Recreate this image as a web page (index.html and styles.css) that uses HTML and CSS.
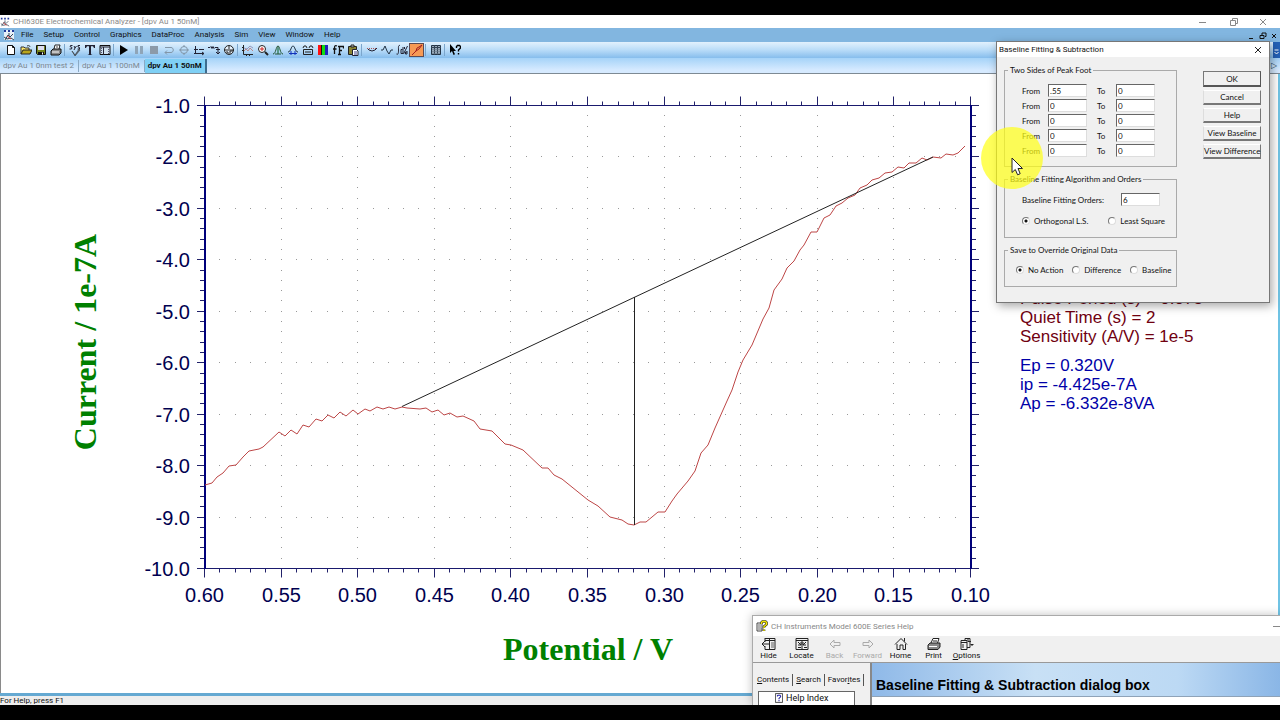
FILE: index.html
```html
<!DOCTYPE html>
<html lang="en">
<head>
    <meta charset="UTF-8">
    <title>CHI630E Electrochemical Analyzer</title>
    <link rel="stylesheet" href="styles.css">
</head>
<body>
<div class="app">
    <header class="titlebar">
        <svg class="logo" viewBox="0 0 12 12"><path d="M1 2h2M5 2h2M9 2h2" stroke="#223a9a" stroke-width="2"/><path d="M6 4v3M2 11l3-5 2 2 3-3M1 8l3 2 4-1 3 2" stroke="#456" fill="none"/><path d="M4 7l4 3" stroke="#c33"/></svg>
        <span class="title">CHI630E Electrochemical Analyzer - [dpv Au 1 50nM]</span>
        <div class="window-buttons">
            <button aria-label="Minimize"><svg viewBox="0 0 10 10"><path d="M1 5.500h7"/></svg></button>
            <button aria-label="Restore"><svg viewBox="0 0 10 10"><path d="M2.500 3.500h5v5h-5zM4.500 3v-1.500h5v5h-2"/></svg></button>
            <button aria-label="Close"><svg viewBox="0 0 10 10"><path d="M2 2l6 6M8 2l-6 6"/></svg></button>
        </div>
    </header>

    <nav class="menubar">
        <svg class="logo" viewBox="0 0 12 12"><rect x="1" y="1" width="10" height="10" fill="#e8f0f8"/><path d="M1 2h2M5 2h2M9 2h2" stroke="#223a9a" stroke-width="2"/><path d="M6 4v3M2 11l3-5 2 2 3-3M1 8l3 2 4-1 3 2" stroke="#345" fill="none"/><path d="M4 7l4 3" stroke="#c33"/></svg>
        <button>File</button>
        <button>Setup</button>
        <button>Control</button>
        <button>Graphics</button>
        <button>DataProc</button>
        <button>Analysis</button>
        <button>Sim</button>
        <button>View</button>
        <button>Window</button>
        <button>Help</button>
        <div class="mdi-buttons">
            <button aria-label="Minimize document"><svg viewBox="0 0 8 8"><path d="M1 6.500h4"/></svg></button>
            <button aria-label="Restore document"><svg viewBox="0 0 8 8"><path d="M1 3.500h4v3h-4zM3 3v-2h4v3.500h-1"/></svg></button>
            <button aria-label="Close document"><svg viewBox="0 0 8 8"><path d="M2 2l4 4M6 2l-4 4"/></svg></button>
        </div>
    </nav>

    <div class="toolbar">
        <button aria-label="New"><svg viewBox="0 0 12 12"><path d="M2.500 1.500h5l2 2v7h-7zM7.500 1.500v2h2" fill="#fff" stroke="#111"/></svg></button>
        <button aria-label="Open"><svg viewBox="0 0 12 12"><path d="M1 10V3h3l1 1h4v2" fill="#ffe96a" stroke="#333"/><path d="M1 10l2-4h9l-2 4z" fill="#b9a51c" stroke="#222"/><path d="M7 2c2-1 3 0 3 1" fill="none" stroke="#333"/></svg></button>
        <button aria-label="Save"><svg viewBox="0 0 12 12"><path d="M1.500 1.500h9v9h-8l-1-1z" fill="#73841c" stroke="#111"/><path d="M3 2h6v4H3z" fill="#dde"/><path d="M3 8h6v3H3z" fill="#111"/><path d="M7 8.500h1v2h-1z" fill="#fff"/></svg></button>
        <button aria-label="Print"><svg viewBox="0 0 12 12"><path d="M4 5l1-4h5l-1 4" fill="#fff" stroke="#222"/><path d="M1 7l2-2h8v4l-2 2H1z" fill="#888" stroke="#111"/><path d="M2 8h7" stroke="#fff"/><path d="M6 3h2" stroke="#444"/></svg></button>
        <span class="sep"></span>
        <button aria-label="System setup"><svg viewBox="0 0 12 12"><path d="M3.500 1.500h-2l-.5 1 2 1-.5 1.500h-2M5 2l1 2 1.500-2M6 4l-1 2M11 1.500h-2v1.500l1.500.5v1.500h-2" fill="none" stroke="#223"/><path d="M3 7l3 4 4-6 1 1-5 6z" fill="#678" stroke="#333" stroke-width=".6"/></svg></button>
        <button aria-label="Technique"><svg viewBox="0 0 12 12"><path d="M1 1h10v3h-1l-1-1.700H7v8l1.500.7h-5l1.500-.7v-8H3L2 4H1z" fill="#223"/></svg></button>
        <button aria-label="Parameters"><svg viewBox="0 0 12 12"><path d="M1 1.500h10v9H1z" fill="#cfe0ee" stroke="#111"/><path d="M1 3h10M4.500 3v8" stroke="#223"/><path d="M2.500 4v6M9.500 5v5" stroke="#557" stroke-dasharray="1 1"/></svg></button>
        <span class="sep"></span>
        <button aria-label="Run"><svg viewBox="0 0 12 12"><path d="M2 1v10l8-5z" fill="#000"/></svg></button>
        <button aria-label="Pause" disabled><svg viewBox="0 0 12 12"><path d="M2 2h3v8H2zM7 2h3v8H7z" fill="#8fa5b8"/></svg></button>
        <button aria-label="Stop" disabled><svg viewBox="0 0 12 12"><path d="M2 2h8v8H2z" fill="#8c9aa8"/></svg></button>
        <button aria-label="Reverse" disabled><svg viewBox="0 0 12 12"><path d="M2 3.500h6c3 0 3 5 0 5H2M4 6.500l-2 2 2 2" fill="none" stroke="#8296a8"/></svg></button>
        <button aria-label="Zero current" disabled><svg viewBox="0 0 12 12"><path d="M1 6h10M6 1v2M6 9v2" stroke="#8296a8"/><circle cx="6" cy="6" r="3.500" fill="none" stroke="#8296a8"/></svg></button>
        <button aria-label="iR compensation"><svg viewBox="0 0 12 12"><path d="M2.500 2v8M1 5.500h4M6 5.500h5M1 9.500h10M9 8l2 1.500L9 11" fill="none" stroke="#223"/></svg></button>
        <button aria-label="Filter"><svg viewBox="0 0 12 12"><path d="M0 3.500h2l1-1 1 2 1-2 1 2 1-1h3v6M8 8l2 2 2-2M8 5.500h4" fill="none" stroke="#223"/></svg></button>
        <button aria-label="Cell"><svg viewBox="0 0 12 12"><circle cx="6" cy="6" r="4.500" fill="#e7f2fc" stroke="#222"/><path d="M1 6h10M6 2v3M3 8h2v2M7 10V7h3" fill="none" stroke="#222"/></svg></button>
        <span class="sep"></span>
        <button aria-label="Present data"><svg viewBox="0 0 12 12"><path d="M1.500 1v9.500H11M0 3.500h2M0 6.500h2M4.500 10v2M7.500 10v2" fill="none" stroke="#222"/><path d="M2 7l2-2 2 2 2-3 3 3" fill="none" stroke="#b88"/><path d="M2 4l3 1 3-3 3 2" fill="none" stroke="#99b"/></svg></button>
        <button aria-label="Zoom"><svg viewBox="0 0 12 12"><circle cx="5" cy="5" r="3.500" fill="#fff" stroke="#222"/><path d="M3 5h4M5 3v4" stroke="#c22"/><path d="M8 8l3 3" stroke="#222" stroke-width="2"/></svg></button>
        <button aria-label="Peak"><svg viewBox="0 0 12 12"><path d="M1 10c3 0 3-8 5-8s2 8 5 8M6 2v8M3 10h6" fill="none" stroke="#253"/><path d="M5 4h2v5H5z" fill="#598"/></svg></button>
        <button aria-label="Peak parameters"><svg viewBox="0 0 12 12"><path d="M1 8c3 0 3-6 5-6s2 6 5 6" fill="none" stroke="#234"/><path d="M2 9.500h8M4 7v4M8 7v4" stroke="#13b"/></svg></button>
        <button aria-label="Overlay"><svg viewBox="0 0 12 12"><path d="M1 4l1-2h2l1 2M7 4l1-2h2l1 2M1.500 5.500h9v5h-9zM3 8h6" fill="none" stroke="#222"/></svg></button>
        <button aria-label="Color"><svg viewBox="0 0 12 12"><path d="M1 1h3v10H1z" fill="#f11"/><path d="M4 1h1v10H4z" fill="#111"/><path d="M5 1h3v10H5z" fill="#1d1"/><path d="M8 1h3v10H8z" fill="#22b"/></svg></button>
        <button aria-label="Font"><svg viewBox="0 0 12 12"><path d="M5 2c-2-1-2.500 0-2.500 2v6M1 5h3.500M7.500 2v9M6 2.500h5.500v2M7 6.500h3M6 10.500h3" fill="none" stroke="#111" stroke-width="1.300"/></svg></button>
        <button aria-label="Copy"><svg viewBox="0 0 12 12"><path d="M1.500 2.500h8v8h-8z" fill="#8a8432" stroke="#222"/><path d="M4 1h3v2H4z" fill="#ccc" stroke="#222"/><path d="M5.500 5.500h4l1.500 1.500v4.500H5.500z" fill="#fff" stroke="#223"/><path d="M7 8h3M7 10h3" stroke="#448"/></svg></button>
        <span class="sep"></span>
        <button aria-label="Smooth"><svg viewBox="0 0 12 12"><path d="M1 4l2 2 3 1 3-1 2-2" fill="none" stroke="#223"/><path d="M1 4.500h10" stroke="#a55" stroke-dasharray="1 1"/></svg></button>
        <button aria-label="Derivative"><svg viewBox="0 0 12 12"><path d="M0 6h2l2-4 2 5 2 3 2-4h2" fill="none" stroke="#234"/></svg></button>
        <button aria-label="Integration"><svg viewBox="0 0 12 12"><path d="M4 1.500c-2-.5-1.500 2-1.500 4.500s0 5-2 4M6.500 5.500H5v4h2V3M11.500 2l-4 8M8.500 3v2M11 7v3H9.500V8H11" fill="none" stroke="#223"/></svg></button>
        <button aria-label="Baseline" class="active"><svg viewBox="0 0 12 12"><path d="M1 11l4-4 1-3 2-1 3-2-3 4-3 2" fill="none" stroke="#a32020"/></svg></button>
        <span class="sep"></span>
        <button aria-label="Data list"><svg viewBox="0 0 12 12"><path d="M1.500 1.500h9v9h-9z" fill="#9ab" stroke="#234"/><path d="M4.500 1v10M7.500 1v10M1 3.500h10" stroke="#345"/><path d="M2 5.500h8M2 7.500h8M2 9.500h8" stroke="#678" stroke-width=".6"/></svg></button>
        <span class="sep"></span>
        <button aria-label="Context help"><svg viewBox="0 0 12 12"><path d="M1 0v9l2-2 1.500 4 1.500-.7L4.500 7H7z" fill="#000"/><path d="M7.500 4V2.500l1-1h2l1 1v1.500L9.500 6v1.500M9.500 9v1.500" fill="none" stroke="#000" stroke-width="1.400"/></svg></button>
        <button class="overflow" aria-label="More buttons"><svg viewBox="0 0 6 12"><path d="M1 6h4M1 8l2 2 2-2" fill="none" stroke="#fff"/></svg></button>
    </div>

    <div class="tabs">
        <button>dpv Au 1 0nm test 2</button>
        <button>dpv Au 1 100nM</button>
        <button class="current">dpv Au 1 50nM</button>
        <span class="scroll">▷</span>
    </div>

    <main class="document">
        <svg class="plot" viewBox="1 74 1277 619" preserveAspectRatio="xMinYMin meet">
            <g id="grid"></g>
            <g id="ticks"></g>
            <path class="axis" d="M205 105.500H971M205 568.500H971"/>
            <path class="axis side" d="M205 105V569M971 105V569"/>
            <g id="labels"></g>
            <polyline id="curve" class="curve"/>
            <path class="baseline" d="M402 406.500L933 157M634.500 297V525"/>
            <text class="axis-title" x="588" y="660">Potential / V</text>
            <text class="axis-title" transform="translate(96 342) rotate(-90)">Current / 1e-7A</text>
            <text class="params" x="1020" y="304">Pulse Period (s) = 0.075</text>
            <text class="params" x="1020" y="323">Quiet Time (s) = 2</text>
            <text class="params" x="1020" y="342">Sensitivity (A/V) = 1e-5</text>
            <text class="results" x="1020" y="371">Ep = 0.320V</text>
            <text class="results" x="1020" y="390">ip = -4.425e-7A</text>
            <text class="results" x="1020" y="409">Ap = -6.332e-8VA</text>
        </svg>
    </main>

    <footer class="statusbar">For Help, press F1</footer>

    <section class="dialog">
        <header class="dialog-title">
            <span>Baseline Fitting &amp; Subtraction</span>
            <button aria-label="Close dialog"><svg viewBox="0 0 10 10"><path d="M2 2l6 6M8 2l-6 6"/></svg></button>
        </header>
        <form class="dialog-body">
            <div class="groups">
                <fieldset class="peak">
                    <legend>Two Sides of Peak Foot</legend>
                    <div class="range"><label for="f1">From</label><input id="f1" value=".55"><label for="t1">To</label><input id="t1" value="0"></div>
                    <div class="range"><label for="f2">From</label><input id="f2" value="0"><label for="t2">To</label><input id="t2" value="0"></div>
                    <div class="range"><label for="f3">From</label><input id="f3" value="0"><label for="t3">To</label><input id="t3" value="0"></div>
                    <div class="range"><label for="f4">From</label><input id="f4" value="0"><label for="t4">To</label><input id="t4" value="0"></div>
                    <div class="range"><label for="f5">From</label><input id="f5" value="0"><label for="t5">To</label><input id="t5" value="0"></div>
                </fieldset>
                <fieldset class="algorithm">
                    <legend>Baseline Fitting Algorithm and Orders</legend>
                    <div class="orders"><label for="orders">Baseline Fitting Orders:</label><input id="orders" value="6"></div>
                    <div class="radios">
                        <label><input type="radio" name="alg" checked>Orthogonal L.S.</label>
                        <label><input type="radio" name="alg">Least Square</label>
                    </div>
                </fieldset>
                <fieldset class="save">
                    <legend>Save to Override Original Data</legend>
                    <div class="radios">
                        <label><input type="radio" name="save" checked>No Action</label>
                        <label><input type="radio" name="save">Difference</label>
                        <label><input type="radio" name="save">Baseline</label>
                    </div>
                </fieldset>
            </div>
            <div class="actions">
                <button type="button" class="default">OK</button>
                <button type="button">Cancel</button>
                <button type="button">Help</button>
                <button type="button">View Baseline</button>
                <button type="button">View Difference</button>
            </div>
        </form>
    </section>

    <section class="help">
        <header class="help-title">
            <svg viewBox="0 0 12 12"><path d="M1 3h5v8H1z" fill="#fff" stroke="#444"/><path d="M2 5h3M2 7h3M2 9h6" stroke="#666"/><path d="M5.500 4V2.500l1-1h3l1 1v2L8 6.500V8M8 9.500V11" fill="none" stroke="#222" stroke-width="2.600"/><path d="M5.500 4V2.500l1-1h3l1 1v2L8 6.500V8M8 9.500V11" fill="none" stroke="#f3e600" stroke-width="1.500"/></svg>
            <span>CH Instruments Model 600E Series Help</span>
            <button aria-label="Minimize help"><svg viewBox="0 0 10 10"><path d="M2 5.500h7"/></svg></button>
        </header>
        <div class="help-toolbar">
            <button><svg viewBox="0 0 14 14"><path d="M3 1.500h10v11H3V9M3 5V1M7.500 2v10M3 3.500h10" fill="none"/><path d="M7 7H1M3 4L0 7l3 3" fill="none"/><path d="M9 6h3M9 8h3M9 10h3" stroke-width=".7"/></svg>Hide</button>
            <button><svg viewBox="0 0 14 14"><path d="M1 1.500h12v11H1zM1 3.500h12M7 3v9" fill="none"/><path d="M3 5l3 3M6 5v3H3M11 5L8 8M8 5v3h3M3 10.500h3M9 10.500h3" fill="none"/></svg>Locate</button>
            <button disabled><svg viewBox="0 0 14 14"><path d="M2 7l4-4v2.500h6v3H6V11z" fill="none"/></svg>Back</button>
            <button disabled><svg viewBox="0 0 14 14"><path d="M12 7L8 3v2.500H2v3h6V11z" fill="none"/></svg>Forward</button>
            <button><svg viewBox="0 0 14 14"><path d="M1 7.500l6-6 6 6M3 7v5.500h3V8h3v4.500h2.500V7M10.500 1v3.500" fill="none"/></svg>Home</button>
            <button><svg viewBox="0 0 14 14"><path d="M4 6l2-4.500h6L10.500 6M6 4h4" fill="#fff"/><path d="M1 8l2-2h10v4l-2 2.500H1z" fill="#888"/><path d="M2 9.500h8" stroke="#fff"/></svg>Print</button>
            <button><svg viewBox="0 0 14 14"><path d="M1 3.500h6v9H1zM1 5.500h6M5 3V1.500h5v9H7M8 1.500v3h3M3 7v4" fill="none"/><path d="M10 7h4l-2 2z" fill="#222" stroke="none"/></svg><span><u>O</u>ptions</span></button>
        </div>
        <div class="help-main">
            <aside class="help-nav">
                <div class="help-tabs">
                    <button class="on"><u>C</u>ontents</button><button><u>S</u>earch</button><button>Favor<u>i</u>tes</button>
                </div>
                <div class="help-list">
                    <svg viewBox="0 0 10 12"><path d="M.5 .5h9v11h-9z" fill="#fff" stroke="#222"/><path d="M3 4V3l1-.5h2l1 1v1L5 6.500v1M5 8.500V10" fill="none" stroke="#22a" stroke-width="1.300"/></svg>
                    <a href="#index">Help Index</a>
                </div>
            </aside>
            <article class="help-page"><h1>Baseline Fitting &amp; Subtraction dialog box</h1></article>
        </div>
    </section>

    <!-- mouse pointer with click highlight -->
    <div class="pointer">
        <svg viewBox="0 0 12 19"><path d="M1 1v14.500l3.300-3 2.300 5.300 2.600-1.100L7 11.500h4.500z" fill="#fff" stroke="#222"/></svg>
    </div>
</div>

<script>
    const ns = 'http://www.w3.org/2000/svg';
    const left = 205, right = 971, top0 = 105.5, bottom = 568.5;
    const dx = (right - left) / 50; // 5 minor steps per 0.05 V
    const dy = (bottom - top0) / 45; // 5 minor steps per unit

    const curve = [
        [205,485],[212,483],[217,477],[223,473],[229,466],[236,465],[243,457],[249,451],[259,449],[263,447],
        [279,432],[285,436],[291,430],[297,434],[303,425],[309,427],[316,419],[322,421],[328,415],[334,418],
        [340,412],[346,416],[353,410],[358,414],[365,409],[370,411],[377,407],[383,409],[389,407],[395,409],
        [402,407],[407,408],[420,409],[426,408],[432,412],[438,410],[444,415],[450,413],[457,417],[463,416],
        [474,421],[480,429],[492,431],[505,444],[511,445],[523,450],[542,468],[548,468],[554,475],[562,479],
        [588,500],[598,506],[610,517],[622,520],[628,524],[634,525],[640,522],[646,522],[658,512],[665,512],
        [672,501],[677,494],[688,481],[695,471],[701,453],[708,445],[715,428],[727,401],[732,390],[738,372],
        [743,360],[752,345],[763,319],[769,308],[774,290],[782,279],[787,268],[794,261],[800,250],[804,245],
        [811,232],[817,232],[824,218],[830,215],[836,206],[842,203],[848,198],[855,195],[860,188],[867,185],
        [872,180],[879,178],[885,173],[892,172],[898,167],[904,168],[909,163],[916,163],[922,158],[927,160],
        [933,157],[941,158],[946,154],[953,155],[958,153],[965,146]
    ];

    function add(parent, tag, attrs, text) {
        const el = document.createElementNS(ns, tag);
        for (const k in attrs) el.setAttribute(k, attrs[k]);
        if (text) el.textContent = text;
        document.getElementById(parent).appendChild(el);
    }

    let ticks = '';
    for (let i = 0; i <= 50; i++) {
        const x = Math.round(left + i * dx) - 0.5;
        const len = i % 5 === 0 ? 9 : 4;
        ticks += `M${x} ${top0}v${-len}M${x} ${bottom}v${len}`;
        if (i % 5 === 0) add('labels', 'text', {x: x, y: 602, class: 'x-label'}, (0.6 - i / 100).toFixed(2));
    }
    for (let j = 0; j <= 45; j++) {
        const y = Math.floor(top0 + j * dy) + 0.5;
        const len = j % 5 === 0 ? 8 : 5;
        ticks += `M${left} ${y}h${-len}M${right} ${y}h${len}`;
        if (j % 5 === 0) add('labels', 'text', {x: 190, y: y + 7, class: 'y-label'}, (-1 - j / 5).toFixed(1));
    }
    add('ticks', 'path', {d: ticks, class: 'tick'});

    // dots along every major grid line
    let dots = '';
    for (let i = 1; i < 50; i++) {
        for (let j = 1; j < 45; j++) {
            if (i % 5 && j % 5) continue;
            dots += `M${Math.round(left + i * dx) - 1} ${Math.floor(top0 + j * dy) + 0.5}h1`;
        }
    }
    add('grid', 'path', {d: dots, class: 'dots'});
    document.getElementById('curve').setAttribute('points', curve.join(' '));
</script>
</body>
</html>
```
FILE: styles.css
```css
* { box-sizing: border-box; }
body { margin: 0; padding: 15px 0; height: 100vh; background: #000; font-family: Roboto, "Open Sans", sans-serif; font-size: 8px; color: #111; overflow: hidden; }
button { font: inherit; color: inherit; background: none; border: 0; padding: 0; margin: 0; }
svg { display: block; }
.app { position: relative; display: flex; flex-direction: column; height: 100%; background: #fff; overflow: hidden; }

.titlebar { display: flex; align-items: center; height: 13px; flex: none; color: #8a8a8a; line-height: 10px; }
.logo { width: 12px; height: 12px; flex: none; }
.titlebar .logo { width: 10px; height: 10px; margin-right: 3px; }
.window-buttons { display: flex; gap: 20px; margin-left: auto; margin-right: 12px; }
.window-buttons svg, .dialog-title svg, .help-title button svg { width: 10px; height: 10px; fill: none; stroke: #888; }

.menubar { display: flex; align-items: center; gap: 10px; height: 14px; flex: none; padding-left: 3px; background: #82b6e0; line-height: 12px; }
.menubar .logo { margin-right: -4px; }
.mdi-buttons { display: flex; gap: 3px; margin-left: auto; margin-right: 2px; padding-top: 2px; }
.mdi-buttons svg { width: 8px; height: 8px; fill: none; stroke: #111; }

.toolbar { display: flex; align-items: center; height: 16px; flex: none; padding-left: 3px; background: linear-gradient(#e2f1fd, #b9dcf8 50%, #86bdec); }
.toolbar button { width: 15px; height: 14px; flex: none; display: flex; align-items: center; justify-content: center; }
.toolbar svg { width: 12px; height: 12px; }
.toolbar .sep { width: 1px; height: 12px; margin: 0 2px 0 1px; background: #7ba6cc; }
.toolbar .active { background: #f69a55; border: 1px solid #5c4a52; }
.toolbar .overflow { width: 7px; height: 16px; margin-left: auto; background: #2461b6; }

.tabs { display: flex; align-items: flex-start; height: 16px; flex: none; background: linear-gradient(#a5d3f8, #d6eaff 80%); border-bottom: 1px solid #7e8a94; color: #7b8791; }
.tabs button { height: 12px; line-height: 12px; margin-top: 2px; padding: 0 4px 0 3px; border-right: 1px solid #8aa9c4; }
.tabs .current { height: 14px; margin-top: 1px; padding: 0 3px; background: #7fd0f5; border-right: 2px solid #3d6c8e; color: #111; font-weight: bold; }
.tabs .scroll { margin-left: auto; padding-right: 3px; line-height: 16px; color: #245; }

.document { flex: 1; min-height: 0; border-left: 1px solid #8a8a8a; border-right: 2px solid #6fc3e4; }
.plot { width: 100%; height: 100%; }
.axis { stroke: #1a1a6e; fill: none; }
.axis.side { stroke: #00007a; stroke-width: 2; }
.tick { stroke: #22226a; fill: none; }
.dots { stroke: #999; }
.curve { fill: none; stroke: #bd4646; stroke-width: 1; }
.baseline { fill: none; stroke: #222; }
.x-label, .y-label { font: 20px "Liberation Sans Narrow", "Liberation Sans", sans-serif; fill: #000050; }
.x-label { text-anchor: middle; }
.y-label { text-anchor: end; }
.axis-title { font: bold 32px "Liberation Serif", serif; fill: #008000; text-anchor: middle; }
.params, .results { font: 17px "Liberation Sans", sans-serif; fill: #700010; }
.results { fill: #0000a8; }

.statusbar { flex: none; height: 12px; border-top: 3px solid #65a9d2; background: #eee; line-height: 9px; }

.dialog { position: absolute; top: 26px; right: 10px; width: 274px; background: #f0f0f0; border: 1px solid #777; box-shadow: 2px 3px 9px rgba(0, 0, 0, .35); line-height: 10px; }
.dialog-title { display: flex; justify-content: space-between; align-items: center; height: 15px; padding: 0 6px 0 2px; background: #fff; }
.dialog-title svg { stroke: #222; }
.dialog-body { display: flex; justify-content: space-between; align-items: flex-start; padding: 8px 7px 15px; font-family: Lato, sans-serif; }
.groups { width: 173px; display: flex; flex-direction: column; gap: 7px; }
fieldset { margin: 0; border: 1px solid #aaa; min-width: 0; }
legend { padding: 0 2px; height: 10px; line-height: 10px; }
.peak { padding: 8px 17px 8px; }
.algorithm { padding: 9px 16px 11px 17px; }
.save { padding: 9px 11px 11px; }
.peak legend { margin-left: -14px; }
.algorithm legend { margin-left: -14px; }
.save legend { margin-left: -8px; }
.range { display: flex; align-items: center; height: 15px; }
.range label { width: 26px; }
.range input + label { width: 29px; padding-left: 10px; }
.dialog input:not([type]) { width: 39px; height: 13px; padding: 0 1px; border: 1px solid; border-color: #666 #ddd #ddd #666; background: #fff; font: 8px Lato, sans-serif; color: #111; }
.orders { display: flex; justify-content: space-between; align-items: center; height: 13px; margin-bottom: 9px; }
.radios { display: flex; gap: 20px; height: 11px; }
.save .radios { gap: 9px; }
.radios label { display: flex; align-items: center; gap: 4px; white-space: nowrap; }
.radios input { appearance: none; width: 8px; height: 8px; margin: 0; border: 1px solid; border-color: #777 #ddd #ddd #777; border-radius: 50%; background: #fff; }
.radios input:checked { background: radial-gradient(circle, #111 0 1px, #fff 2px); }
.actions { width: 58px; margin-top: 6px; margin-right: 1px; display: flex; flex-direction: column; gap: 3px; }
.actions button { height: 15px; border: 1px solid; border-color: #fff #777 #777 #ddd; border-bottom-width: 2px; background: #f0f0f0; white-space: nowrap; }
.actions .default { height: 16px; border-color: #777 #555 #555 #777; }

.help { position: absolute; left: 752px; right: 0; top: 600px; bottom: 0; display: flex; flex-direction: column; background: #f0f0f0; border: 1px solid #aaa; border-width: 1px 0 0 1px; box-shadow: 0 0 9px rgba(0, 0, 0, .25); overflow: hidden; }
.help-title { display: flex; align-items: center; flex: none; gap: 3px; height: 20px; padding-left: 3px; background: #fff; color: #888; }
.help-title > svg { width: 12px; height: 12px; }
.help-title button { margin-left: auto; margin-right: -1px; }
.help-toolbar { display: flex; flex: none; height: 27px; border-bottom: 1px solid #999; }
.help-toolbar button { width: 33px; margin-left: -1px; margin-right: 1px; display: flex; flex-direction: column; align-items: center; line-height: 10px; padding-top: 1px; }
.help-toolbar svg { width: 14px; height: 14px; stroke: #222; }
.help-toolbar button:disabled { color: #aaa; }
.help-toolbar button:disabled svg { stroke: #aaa; }
.help-main { display: flex; flex: 1; min-height: 0; }
.help-nav { width: 119px; flex: none; padding: 11px 15px 0 4px; border-right: 2px solid #888; }
.help-tabs { display: flex; height: 14px; }
.help-tabs button { line-height: 12px; height: 12px; padding: 0 3px; border-right: 1px solid #555; }
.help-tabs button.on { padding-left: 0; }
.help-list { display: flex; align-items: center; gap: 3px; height: 20px; margin: 3px 0 0 1px; padding: 0 0 6px 16px; background: #fff; border: 1px solid #666; font: 9px Roboto, sans-serif; }
.help-list svg { width: 8px; height: 10px; }
.help-list a { color: #111; text-decoration: none; }
.help-page { flex: 1; background: #fff; }
.help-page h1 { margin: 0; height: 34px; padding: 11px 4px 0; background: linear-gradient(90deg, #8fb9e8, #c8e0f5 40%, #bcd9f4 75%, #8ab6e6); border-bottom: 1px solid #8fa3b8; font: bold 14px/22px "Liberation Sans", sans-serif; color: #000; }

.pointer { position: absolute; left: 981px; top: 112px; width: 62px; height: 62px; padding: 30px 0 0 30px; border-radius: 50%; background: rgba(255, 255, 20, .7); pointer-events: none; }
.pointer svg { width: 12px; height: 19px; }
```
